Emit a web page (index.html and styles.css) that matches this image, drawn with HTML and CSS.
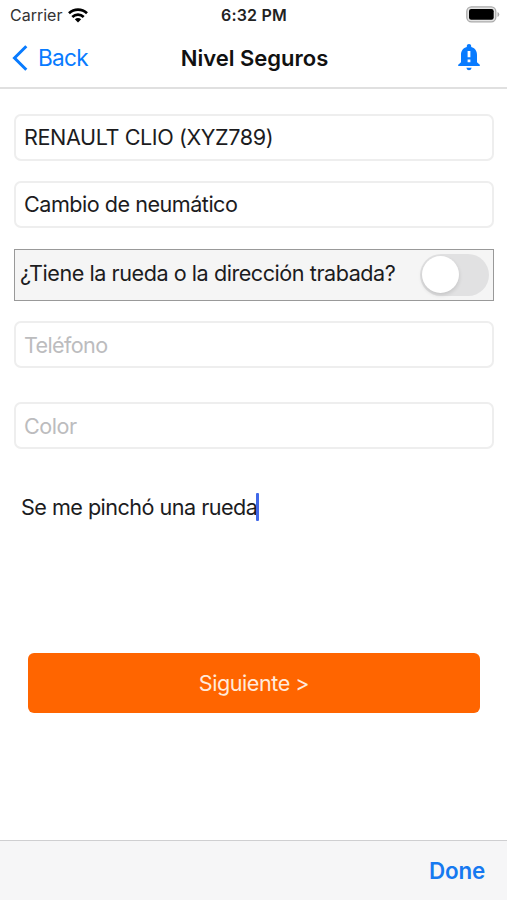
FILE: index.html
```html
<!DOCTYPE html>
<html lang="es">
<head>
<meta charset="utf-8">
<title>Nivel Seguros</title>
<link rel="stylesheet" href="styles.css">
</head>
<body>
<header class="header">
  <div class="status">
    <div class="carrier"><span>Carrier</span>
      <svg width="20" height="15" viewBox="0 0 20 15" fill="none" stroke="#000" stroke-width="2.7"><path d="M1 5.3C6.2.4 13.8.4 19 5.3M4.3 9C7.6 5.9 12.4 5.9 15.7 9"/><path d="M10 14.5 6.8 11.3Q10 8.8 13.2 11.3Z" fill="#000" stroke="none"/></svg>
    </div>
    <span class="time">6:32 PM</span>
    <svg class="battery" width="34" height="17" viewBox="0 0 34 17"><rect x=".8" y=".8" width="29" height="15" rx="4.6" fill="#e4e4e4" stroke="#aaa" stroke-width="1.3"/><rect x="3" y="3" width="24.7" height="10.7" rx="2.2"/><path d="M31.5 6v5q1.8-.8 1.8-2.5T31.5 6Z" fill="#aaa"/></svg>
  </div>
  <nav class="nav">
    <a class="back"><svg width="16" height="26" viewBox="0 0 16 26" fill="none" stroke="#087bff" stroke-width="3"><path d="M14.3 1.3 2.5 13l11.8 11.7"/></svg><span class="back-label">Back</span></a>
    <h1 class="title">Nivel Seguros</h1>
    <svg class="bell" width="22" height="27" viewBox="0 0 22 27"><path fill="#087bff" fill-rule="evenodd" d="M11 0C9.7 0 8.8.9 8.8 2.2v.9C5.2 4 3 7 3 11v7.2L.2 20.8V22h21.6v-1.2L19 18.200V11c0-4-2.200-7-5.800-7.900v-.9C13.200.9 12.300 0 11 0ZM9.600 7h2.800v6.300H9.600ZM9.600 15.500h2.800v2.800H9.600ZM8.300 23.700h5.400Q13 26.300 11 26.300T8.300 23.700Z"/></svg>
  </nav>
</header>
<main class="form">
  <div class="field"><span class="vehicle">RENAULT CLIO (XYZ789)</span></div>
  <div class="field service-field"><span class="service">Cambio de neumático</span></div>
  <div class="question"><span class="question-label">¿Tiene la rueda o la dirección trabada?</span><div class="switch"><div class="knob"></div></div></div>
  <div class="field phone placeholder"><span class="phone-label">Teléfono</span></div>
  <div class="field color placeholder"><span class="color-label">Color</span></div>
  <div class="notes"><span class="notes-text">Se me pinchó una rueda</span><i class="caret"></i></div>
  <div class="submit"><span class="submit-label">Siguiente &gt;</span></div>
</main>
<footer class="toolbar"><span class="done">Done</span></footer>
</body>
</html>
```
FILE: styles.css
```css
* { box-sizing: border-box; }
body {
  margin: 0;
  width: 507px;
  height: 900px;
  display: flex;
  flex-direction: column;
  overflow: hidden;
  background: #fff;
  color: #1c1c1e;
  font-family: Inter, "Liberation Sans", sans-serif;
  font-size: 21.6px;
  letter-spacing: -.46px;
  line-height: 28px;
  white-space: nowrap;
}
svg { display: block; flex: none; }
.header { height: 89px; border-bottom: 2px solid #e0e0e0; }
.status {
  height: 29px;
  display: grid;
  grid-template-columns: 1fr auto 1fr;
  align-items: center;
  padding: 1px 7px 0 8px;
  font-size: 16px;
}
.carrier { display: flex; align-items: center; gap: 6px; padding-left: 2px; color: #333; letter-spacing: 0; }
.time { font-weight: 600; color: #222; font-size: 16px; letter-spacing: .2px; }
.battery { justify-self: end; margin-top: -2px; }
.nav {
  height: 58px;
  display: grid;
  grid-template-columns: 1fr auto 1fr;
  align-items: center;
  padding: 0 12px 1px;
}
.back { display: flex; align-items: center; gap: 10px; color: #087bff; font-size: 22.6px; letter-spacing: -.7px; }
.title { margin: 0 0 0 2px; font-size: 22px; font-weight: 600; letter-spacing: 0; color: #111; }
.bell { justify-self: end; margin-right: 15px; }
.form { height: 751px; padding: 25px 13px 0 14px; }
.field {
  height: 47px;
  padding: 0 8px 2px;
  display: flex;
  align-items: center;
  border: 2px solid #eee;
  border-radius: 7px;
}
.vehicle { letter-spacing: -.4px; }
.service { letter-spacing: -.5px; }
.service-field { margin-top: 20px; }
.question {
  height: 52px;
  margin-top: 21px;
  padding: 0 4px 3px 5px;
  display: flex;
  align-items: center;
  justify-content: space-between;
  border: 1px solid #999;
  background: #f5f5f5;
}
.question-label { margin-top: -1px; }
.switch {
  width: 69px;
  height: 42px;
  margin-top: 3px;
  padding: 2px;
  border-radius: 21px;
  background: #e1e1e2;
}
.knob { width: 37px; height: 37px; border-radius: 50%; background: #fff; box-shadow: 0 2px 4px #0002; }
.placeholder { padding-bottom: 0; color: #bcbcbe; }
.phone { margin-top: 20px; }
.phone-label { letter-spacing: -.65px; }
.color { margin-top: 34px; }
.notes { display: flex; align-items: center; height: 30px; margin: 43px 0 0 7px; }
.notes-text { letter-spacing: -.53px; }
.caret { width: 3px; height: 28px; margin-left: -1px; border-radius: 1px; background: #4068e8; }
.submit {
  height: 60px;
  margin: 131px 14px 0 14px;
  display: flex;
  align-items: center;
  justify-content: center;
  border-radius: 6px;
  background: #ff6500;
  color: #ffeadb;
}
.toolbar {
  height: 60px;
  padding: 0 22px 0 0;
  display: flex;
  align-items: center;
  justify-content: flex-end;
  border-top: 1px solid #cfcfd1;
  background: #f6f6f7;
}
.done { color: #1679f0; font-size: 22.4px; font-weight: 600; letter-spacing: -.2px; }
```
